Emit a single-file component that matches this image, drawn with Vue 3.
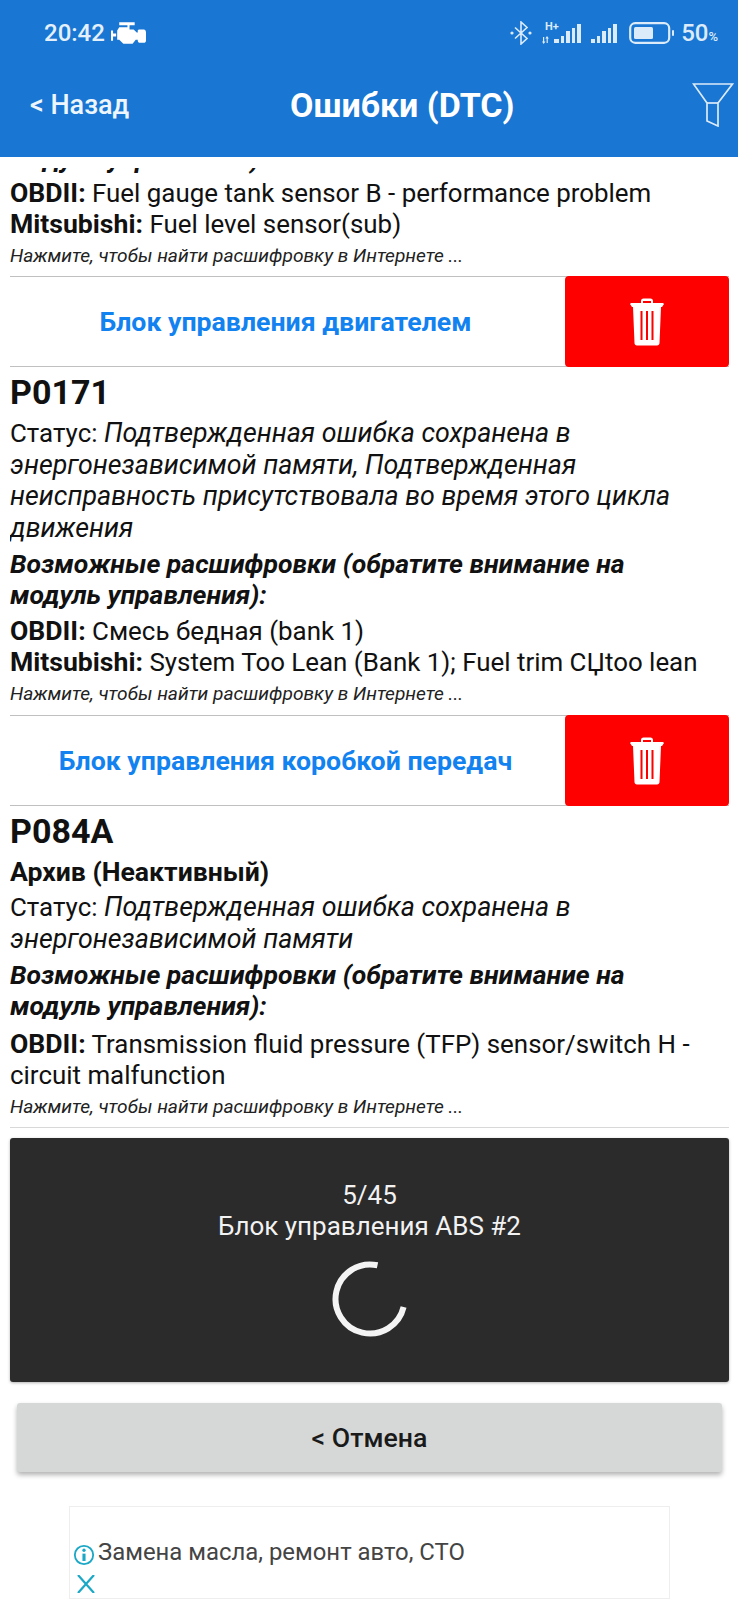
<template>
  <div class="screen">
    <header class="header">
      <div class="status">
        <div class="status-left">
          <span class="time">20:42</span>
          <svg class="engine" viewBox="0 0 34 21" fill="#fff">
            <path d="M8 0h15v3h-5v4h4l3 3h1V8c0-1 1-1 2-1h4c1 0 2 1 2 3v8c0 1-1 2-2 2h-4c-1 0-2-1-2-2v-1h-2l-3 4H12l-4-4H6v-9l2-3h8V3H8z" />
            <path d="M0 8h2v3h3v3H2v4H0z" />
          </svg>
        </div>
        <div class="status-right">
          <svg class="bt" viewBox="0 0 22 24" fill="none" stroke="#dcebfa" stroke-width="1.600">
            <path d="M5 6.500l12 11-6 5.500V1l6 5.500-12 11" />
            <circle cx="2" cy="12" r="1.600" fill="#dcebfa" stroke="none" />
            <circle cx="20" cy="12" r="1.600" fill="#dcebfa" stroke="none" />
          </svg>
          <svg class="sig1" viewBox="0 0 40 22" fill="#dcebfa">
            <text x="3" y="8" font-size="11" font-weight="700" font-family="Roboto, sans-serif">H+</text>
            <path d="M1 15h1.200v4.500h1.300L1.600 22 0 19.500h1zM5 14l1.900 2.500H5.800V21H4.600v-4.500H3.300z" />
            <path d="M12 17h5v4h-5zM19 14h3v7h-3zM24 9h4v12h-4zM30 6h3v15h-3zM35 2h4v19h-4z" />
          </svg>
          <svg class="sig2" viewBox="0 0 27 22" fill="#dcebfa">
            <path d="M0 17h4v4H0zM6 14h3v7H6zM11 9h4v12h-4zM17 6h3v15h-3zM22 2h4v19h-4z" />
          </svg>
          <svg class="battery" viewBox="0 0 46 22" fill="none">
            <rect x="1.200" y="1.200" width="39" height="19.600" rx="5" stroke="#dcebfa" stroke-width="2.200" />
            <rect x="5" y="5" width="19" height="12" rx="1.500" fill="#dcebfa" />
            <rect x="43" y="8" width="2" height="6" rx="1" fill="#dcebfa" />
          </svg>
          <span class="percent">50<small>%</small></span>
        </div>
      </div>
      <div class="toolbar">
        <span class="back">&lt; Назад</span>
        <span class="title">Ошибки (DTC)</span>
        <svg class="filter" viewBox="0 0 42 44" fill="none" stroke="#dcebfa" stroke-width="1.700">
          <path d="M1.500 1h39L26 20v23l-11-5V20z" />
          <path d="M15 20h11" />
        </svg>
      </div>
    </header>

    <main class="list">
      <div class="scroll">
        <p class="line cut"><b><i>модуль управления):</i></b></p>
        <p class="line"><b>OBDII:</b> Fuel gauge tank sensor B - performance problem</p>
        <p class="line"><b>Mitsubishi:</b> Fuel level sensor(sub)</p>
        <p class="hint">Нажмите, чтобы найти расшифровку в Интернете ...</p>

        <div class="module">
          <span class="module-name">Блок управления двигателем</span>
          <button class="trash">
            <svg viewBox="0 0 34 48" fill="#fff">
              <path d="M11 5V3c0-1.500 1-2.500 2.500-2.500h7C22 .5 23 1.500 23 3v2h10l1 1-2 3h-1l-1.500 36c0 1.500-1 2.500-2.500 2.500H7c-1.500 0-2.500-1-2.500-2.500L3 9H2L0 6l1-1zm2 0h8V3h-8z" />
              <path d="M10.500 13h2v29h-2zM16 13h2v29h-2zM21.500 13h2v29h-2z" fill="#f00" />
            </svg>
          </button>
        </div>

        <section class="dtc first">
          <h2 class="code">P0171</h2>
          <p class="line status-row">Статус: <i>Подтвержденная ошибка сохранена в энергонезависимой памяти, Подтвержденная неисправность присутствовала во время этого цикла движения</i></p>
          <p class="line decode"><b><i>Возможные расшифровки (обратите внимание на модуль управления):</i></b></p>
          <p class="line decode-row"><b>OBDII:</b> Смесь бедная (bank 1)</p>
          <p class="line"><b>Mitsubishi:</b> System Too Lean (Bank 1); Fuel trim CЏtoo lean</p>
          <p class="hint">Нажмите, чтобы найти расшифровку в Интернете ...</p>
        </section>

        <div class="module">
          <span class="module-name">Блок управления коробкой передач</span>
          <button class="trash">
            <svg viewBox="0 0 34 48" fill="#fff">
              <path d="M11 5V3c0-1.500 1-2.500 2.500-2.500h7C22 .5 23 1.500 23 3v2h10l1 1-2 3h-1l-1.500 36c0 1.500-1 2.500-2.500 2.500H7c-1.500 0-2.500-1-2.500-2.500L3 9H2L0 6l1-1zm2 0h8V3h-8z" />
              <path d="M10.500 13h2v29h-2zM16 13h2v29h-2zM21.500 13h2v29h-2z" fill="#f00" />
            </svg>
          </button>
        </div>

        <section class="dtc last">
          <h2 class="code">P084A</h2>
          <p class="line archive"><b>Архив (Неактивный)</b></p>
          <p class="line archive-status">Статус: <i>Подтвержденная ошибка сохранена в энергонезависимой памяти</i></p>
          <p class="line decode"><b><i>Возможные расшифровки (обратите внимание на модуль управления):</i></b></p>
          <p class="line decode-row wide"><b>OBDII:</b> Transmission fluid pressure (TFP) sensor/switch H - circuit malfunction</p>
          <p class="hint">Нажмите, чтобы найти расшифровку в Интернете ...</p>
        </section>
      </div>
    </main>

    <div class="progress">
      <div class="progress-text">5/45<br />Блок управления ABS #2</div>
      <svg class="spinner" viewBox="0 0 76 76" fill="none" stroke="#f4f4f4" stroke-width="6">
        <path d="M45.500 4.300A34.500 34.500 0 1 0 71.600 46" />
      </svg>
    </div>

    <button class="cancel">&lt; Отмена</button>

    <aside class="ad">
      <div class="ad-row">
        <svg class="ad-info" viewBox="0 0 24 24" fill="none" stroke="#1ba8c6" stroke-width="2">
          <circle cx="12" cy="12" r="10" />
          <path d="M12 10.500v8" stroke-width="3.400" />
          <circle cx="12" cy="6.800" r="1.800" fill="#1ba8c6" stroke="none" />
        </svg>
        <span>Замена масла, ремонт авто, СТО</span>
      </div>
      <svg class="ad-close" viewBox="0 0 20 18" fill="none" stroke="#1ba8c6" stroke-width="2.200">
        <path d="M2 0l16 18M18 0L2 18" />
      </svg>
    </aside>
  </div>
</template>

<script setup>
</script>

<style>
html, body {
  margin: 0;
  background: #fff;
}
</style>

<style scoped>
.screen {
  width: 738px;
  height: 1599px;
  overflow: hidden;
  background: #fff;
  color: #111;
  font-family: Roboto, "Liberation Sans", sans-serif;
  display: flex;
  flex-direction: column;
}

.header {
  height: 157px;
  flex: none;
  background: #1976d2;
  color: #fff;
  box-sizing: border-box;
  padding: 0 4px 0 30px;
}

.status {
  height: 66px;
  display: flex;
  justify-content: space-between;
  align-items: center;
  padding-left: 14px;
  padding-right: 16px;
}

.status-left, .status-right {
  display: flex;
  align-items: center;
}

.time {
  font-size: 24px;
  font-weight: 500;
  color: #e4f0fb;
}

.engine {
  width: 35px;
  height: 22px;
  margin-left: 6px;
}

.bt {
  width: 22px;
  height: 24px;
}

.sig1 {
  width: 40px;
  height: 22px;
  margin-left: 10px;
}

.sig2 {
  width: 27px;
  height: 22px;
  margin-left: 9px;
}

.battery {
  width: 46px;
  height: 22px;
  margin-left: 11px;
}

.percent {
  font-size: 24px;
  font-weight: 500;
  color: #dcebfa;
  margin-left: 6px;
}

.percent small {
  font-size: 13px;
}

.toolbar {
  height: 78px;
  display: flex;
  align-items: center;
  justify-content: space-between;
  position: relative;
}

.back {
  font-size: 27px;
  font-weight: 500;
  color: #eef6fd;
}

.title {
  position: absolute;
  left: 260px;
  font-size: 34px;
  font-weight: 700;
  white-space: nowrap;
}

.filter {
  width: 42px;
  height: 44px;
}

.list {
  height: 971px;
  flex: none;
  box-sizing: border-box;
  padding: 11px 9px 0 10px;
}

.scroll {
  height: 100%;
  overflow: hidden;
}

.list p {
  margin: 0;
}

.line {
  font-size: 25.900px;
  line-height: 31px;
  max-width: 690px;
}

.line b, .line i {
  line-height: 0;
}

.line b {
  font-size: 26.600px;
}

.line i {
  font-size: 26.800px;
}

.line b i {
  font-size: 26.600px;
}

.list .cut {
  margin-top: -24px;
  margin-bottom: 3px;
}

.hint {
  font-size: 19.150px;
  line-height: 31px;
  font-style: italic;
  color: #222;
}

.module {
  display: flex;
  align-items: center;
  height: 91px;
  margin-top: 5px;
  border-top: 1px solid #c0c0c0;
  border-bottom: 1px solid #c0c0c0;
  box-sizing: border-box;
}

.module-name {
  flex: 1;
  text-align: center;
  font-size: 26.700px;
  font-weight: 700;
  color: #1282f0;
  margin-right: 4px;
}

.trash {
  width: 164px;
  height: 91px;
  flex: none;
  border: none;
  border-radius: 4px;
  background: #f00;
  display: flex;
  align-items: center;
  justify-content: center;
  padding: 0;
}

.trash svg {
  width: 34px;
  height: 48px;
}

.code {
  margin: 5px 0 0;
  font-size: 34px;
  line-height: 40px;
  font-weight: 700;
}

.first {
  padding-bottom: 1px;
}

.list .status-row {
  margin-top: 6px;
  line-height: 31.600px;
}

.list .decode {
  margin-top: 5px;
}

.list .decode-row {
  margin-top: 5px;
}

.list .archive {
  margin-top: 6px;
}

.list .archive-status {
  margin-top: 4px;
  line-height: 31.600px;
}

.list .wide {
  line-height: 31.600px;
}

.list .last .decode {
  margin-top: 4px;
}

.list .last .decode-row {
  margin-top: 7px;
}

.list .last .hint {
  margin-top: -1px;
}

.last {
  padding-bottom: 5px;
  border-bottom: 1px solid #d8d8d8;
}

.progress {
  margin: 10px 9px 0 10px;
  height: 244px;
  flex: none;
  border-radius: 3px;
  background: #2b2b2b;
  color: #f2f2f2;
  box-shadow: 0 1px 3px rgba(0, 0, 0, 0.3);
  display: flex;
  flex-direction: column;
  align-items: center;
  padding-top: 42px;
  box-sizing: border-box;
}

.progress-text {
  text-align: center;
  font-size: 26px;
  line-height: 31px;
}

.spinner {
  width: 76px;
  height: 76px;
  margin-top: 19px;
}

.cancel {
  margin: 21px 16px 0 17px;
  height: 69px;
  flex: none;
  border: none;
  border-radius: 3px;
  background: #d6d7d7;
  box-shadow: 0 3px 5px rgba(0, 0, 0, 0.3);
  font-family: inherit;
  font-size: 26.700px;
  font-weight: 500;
  color: #1a1a1a;
}

.ad {
  margin: 34px 68px 0 69px;
  height: 93px;
  flex: none;
  box-sizing: border-box;
  border: 1px solid #eee;
  padding: 31px 0 0 3px;
  color: #444;
  font-size: 23.900px;
}

.ad-row {
  display: flex;
  align-items: center;
}

.ad-info {
  width: 22px;
  height: 22px;
  margin-top: 6px;
  margin-right: 3px;
}

.ad-close {
  display: block;
  width: 20px;
  height: 18px;
  margin: 9px 0 0 3px;
}
</style>
